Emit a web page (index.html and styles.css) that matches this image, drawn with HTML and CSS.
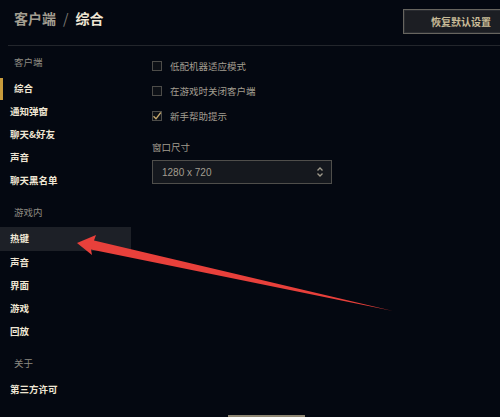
FILE: index.html
```html
<!DOCTYPE html>
<html lang="zh">
<head>
<meta charset="utf-8">
<link rel="stylesheet" href="styles.css">
</head>
<body>
<div class="page">
  <header class="topbar">
    <div class="title"><span class="crumb">客户端</span><span class="sep">/</span><span class="current">综合</span></div>
    <button class="reset">恢复默认设置</button>
  </header>
  <div class="body">
    <nav class="sidebar">
      <div class="section">
        <div class="sec-head">客户端</div>
        <div class="item selected">综合</div>
        <div class="item">通知弹窗</div>
        <div class="item">聊天&amp;好友</div>
        <div class="item">声音</div>
        <div class="item">聊天黑名单</div>
      </div>
      <div class="section">
        <div class="sec-head">游戏内</div>
        <div class="item hover">热键</div>
        <div class="item">声音</div>
        <div class="item">界面</div>
        <div class="item">游戏</div>
        <div class="item">回放</div>
      </div>
      <div class="section">
        <div class="sec-head">关于</div>
        <div class="item">第三方许可</div>
      </div>
    </nav>
    <main class="content">
      <label class="check"><span class="box"></span><span>低配机器适应模式</span></label>
      <label class="check"><span class="box"></span><span>在游戏时关闭客户端</span></label>
      <label class="check"><span class="box checked"><svg viewBox="0 0 10 10" width="10" height="10"><path d="M1.5 5.2 L4 7.8 L8.8 1.5" fill="none" stroke="#c8aa6e" stroke-width="1.3"/></svg></span><span>新手帮助提示</span></label>
      <div class="field-label">窗口尺寸</div>
      <div class="select">
        <span>1280 x 720</span>
        <svg class="arrows" viewBox="0 0 8 12" width="8" height="12"><path d="M1.5 4.5 L4 2 L6.5 4.5 M1.5 7.5 L4 10 L6.5 7.5" fill="none" stroke="#a09b8c" stroke-width="1.3"/></svg>
      </div>
      <div class="footer-btn"></div>
    </main>
  </div>
  <svg class="annot" viewBox="0 0 500 417" width="500" height="417">
    <polygon points="77,243 96,235 94,240.5 393,311 91,249.5 92,255" fill="#e8403b"/>
  </svg>
</div>
</body>
</html>
```

FILE: styles.css
```css
html, body {
  margin: 0;
  padding: 0;
  background: #040811;
  overflow: hidden;
}
.page {
  position: relative;
  width: 500px;
  height: 417px;
  overflow: hidden;
  font-family: "Noto Sans CJK SC", "Liberation Sans", sans-serif;
}
.topbar {
  display: flex;
  justify-content: space-between;
  align-items: flex-start;
  height: 45px;
  margin-left: 8px;
  padding-left: 6px;
  border-bottom: 1px solid #23262c;
}
.title {
  margin-top: 8px;
  line-height: 20px;
  font-size: 14px;
  font-weight: 700;
  display: flex;
  gap: 7px;
}
.crumb { color: #a29d90; }
.sep { color: #7d7a73; font-weight: 400; }
.current { color: #efe6d4; }
.reset {
  margin-top: 9px;
  margin-right: -19px;
  width: 116px;
  height: 25px;
  background: #1c1e23;
  border: 1px solid #67655f;
  box-shadow: inset 0 0 0 1px #2a2c31;
  color: #c9bc98;
  font-family: "Noto Sans CJK SC", sans-serif;
  font-size: 10px;
  font-weight: 700;
  padding: 0;
}
.body {
  display: flex;
}
.sidebar {
  width: 131px;
  flex: none;
  display: flex;
  flex-direction: column;
  gap: 9px;
  padding-top: 5px;
}
.section {
  display: flex;
  flex-direction: column;
}
.sec-head {
  height: 23px;
  line-height: 23px;
  margin-bottom: 3px;
  padding-left: 14px;
  font-size: 9.5px;
  color: #8d8a82;
}
.item {
  position: relative;
  height: 23px;
  line-height: 23px;
  padding-left: 10px;
  font-size: 9.5px;
  font-weight: 700;
  color: #efe6d4;
}
.item.selected {
  padding-left: 14px;
}
.item.selected::before {
  content: "";
  position: absolute;
  left: 0;
  top: 1px;
  width: 3px;
  height: 22px;
  background: #c89b3c;
}
.item.hover {
  background: #1d2027;
  height: 24px;
}
.content {
  flex: 1;
  display: flex;
  flex-direction: column;
  padding-left: 21px;
  padding-top: 7px;
}
.check {
  display: flex;
  align-items: center;
  gap: 8px;
  height: 25px;
  font-size: 9.5px;
  color: #a29d90;
}
.box {
  width: 8px;
  height: 8px;
  border: 1px solid #4d4c49;
  background: #0d1016;
  display: flex;
  align-items: center;
  justify-content: center;
}
.box svg { flex: none; }
.field-label {
  margin-top: 12px;
  height: 14px;
  line-height: 14px;
  font-size: 9.5px;
  color: #a29d90;
}
.select {
  box-sizing: border-box;
  margin-top: 6px;
  width: 180px;
  height: 24px;
  border: 1px solid #4f4e4b;
  background: #15181e;
  display: flex;
  align-items: center;
  justify-content: space-between;
  padding: 0 7px 0 9px;
  font-family: "Liberation Sans", sans-serif;
  font-size: 10px;
  color: #a29d90;
}
.footer-btn {
  margin-top: 231px;
  margin-left: 76px;
  width: 77px;
  height: 3px;
  background: #8f8774;
}
.annot {
  position: absolute;
  left: 0;
  top: 0;
  pointer-events: none;
}
```
